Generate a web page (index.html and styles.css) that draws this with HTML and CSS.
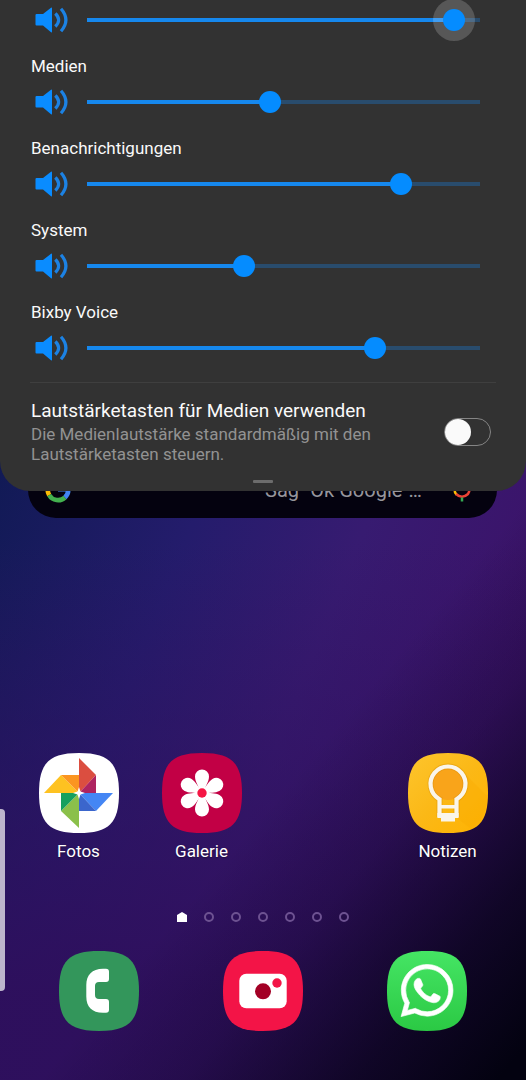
FILE: index.html
```
<!DOCTYPE html>
<html lang="de">
<head>
<meta charset="utf-8">
<meta name="viewport" content="width=device-width, initial-scale=1">
<title>Lautstärke</title>
<link rel="stylesheet" href="styles.css">
</head>
<body>
<svg class="defs" aria-hidden="true">
  <symbol id="speaker" viewBox="0 0 33 26">
    <path d="M1.500 7H8L16 .8Q17 0 17 1.500V24.500Q17 26 16 25.200L8 18.500H1.500Q.5 18.500.5 17.500V8Q.5 7 1.500 7Z" fill="#0a8cff"/>
    <path d="M20.300 6.500Q27 13 20.300 19.500M26 1.800Q35.800 13 26 24.200" fill="none" stroke="#1c82e4" stroke-width="3.200"/>
  </symbol>
  <symbol id="tile" viewBox="0 0 80 80">
    <path d="M40 0C70 0 80 10 80 40S70 80 40 80 0 70 0 40 10 0 40 0Z"/>
  </symbol>
</svg>

<main class="home">
  <div class="search">
    <svg class="search-logo" viewBox="0 0 28 28" fill="none" stroke-width="5" aria-hidden="true">
      <path d="M21.800 6.200A11 11 0 0 0 4.500 8.500" stroke="#ea4335"/>
      <path d="M4.500 8.500A11 11 0 0 0 4.500 19.500" stroke="#fbbc05"/>
      <path d="M4.500 19.500A11 11 0 0 0 21.500 22" stroke="#43b04f"/>
      <path d="M14 13H25A11 11 0 0 1 21.500 22" stroke="#4285f4"/>
    </svg>
    <span class="search-hint">Sag "Ok Google"…</span>
    <button class="mic" aria-label="Sprachsuche">
      <svg viewBox="0 0 24 24" fill="none" stroke-width="2.500" aria-hidden="true">
        <rect x="9" y="0" width="6" height="13" rx="3" fill="#4285f4"/>
        <path d="M4.500 11Q4.500 14.500 6.500 16.500" stroke="#fbbc05"/>
        <path d="M6 16Q12 21.500 18 16Q19.500 14 19.500 11" stroke="#ea4335"/>
        <path d="M12 19.500V23.500" stroke="#34a853"/>
      </svg>
    </button>
  </div>

  <nav class="apps" aria-label="Apps">
    <a class="app" href="#fotos">
      <svg class="app-icon" viewBox="0 0 80 80" aria-hidden="true">
        <use href="#tile" fill="#fff"/>
        <path d="M40 5L57 22L40 40Z" fill="#db4e40"/><path d="M57 22V40H40Z" fill="#ae2460"/>
        <path d="M5 40L22 22L40 40Z" fill="#fec221"/><path d="M22 22H40V40Z" fill="#fb9520"/>
        <path d="M40 40H74L57 58Z" fill="#4486f4"/><path d="M40 40L57 58H40Z" fill="#3b66cc"/>
        <path d="M40 40V75L22 58Z" fill="#8bc04a"/><path d="M22 40H40L22 58Z" fill="#16a05f"/>
        <path d="M40 34L41.500 38.500L46 40L41.500 41.500L40 46L38.500 41.500L34 40L38.500 38.500Z" fill="#fff"/>
      </svg>
      <span>Fotos</span>
    </a>
    <a class="app" href="#galerie">
      <svg class="app-icon" viewBox="0 0 80 80" aria-hidden="true">
        <defs><path id="petal" d="M37.500 38C37 33 33 29 33 23.500A7 7 0 0 1 47 23.500C47 29 43 33 42.500 38Z" fill="#fff"/></defs>
        <use href="#tile" fill="#c20045"/>
        <use href="#petal"/>
        <use href="#petal" transform="rotate(60 40 40)"/>
        <use href="#petal" transform="rotate(120 40 40)"/>
        <use href="#petal" transform="rotate(180 40 40)"/>
        <use href="#petal" transform="rotate(240 40 40)"/>
        <use href="#petal" transform="rotate(300 40 40)"/>
        <circle cx="40" cy="40" r="6" fill="#fff"/>
        <circle cx="40" cy="40" r="4.700" fill="#f51644"/>
      </svg>
      <span>Galerie</span>
    </a>
    <a class="app app-last" href="#notizen">
      <svg class="app-icon" viewBox="0 0 80 80" aria-hidden="true">
        <defs><linearGradient id="amber" x1="0" y1="0" x2="1" y2="1"><stop offset="0" stop-color="#fdc52d"/><stop offset=".5" stop-color="#fbb816"/><stop offset="1" stop-color="#ffb300"/></linearGradient></defs>
        <use href="#tile" fill="url(#amber)"/>
        <path d="M57 21L79 43Q79 66 63 76L50 66V47Q62 36 57 21Z" fill="#f8a900" opacity=".3"/>
        <circle cx="40" cy="31" r="16" fill="#f9a41a"/>
        <path d="M31.500 64V46.300A17.500 17.500 0 1 1 48.500 46.300V64" fill="none" stroke="#c98200" stroke-opacity=".3" stroke-width="6"/>
        <path d="M31.500 64V46.300A17.500 17.500 0 1 1 48.500 46.300V64" fill="none" stroke="#faf5ea" stroke-width="4.200"/>
        <path d="M32 52H48V55.500H32ZM29.400 60H50.600V65H47V68.500H33V65H29.400Z" fill="#faf5ea"/>
      </svg>
      <span>Notizen</span>
    </a>
  </nav>

  <div class="pages" aria-hidden="true">
    <svg class="page-home" viewBox="0 0 10 10"><path d="M0 3L5 0L10 3V10H0Z" fill="#fff"/></svg>
    <i class="page"></i><i class="page"></i><i class="page"></i><i class="page"></i><i class="page"></i><i class="page"></i>
  </div>

  <nav class="dock" aria-label="Favoriten">
    <a class="app" href="#telefon" aria-label="Telefon">
      <svg class="app-icon" viewBox="0 0 80 80" aria-hidden="true">
        <use href="#tile" fill="#33965b"/>
        <path d="M47 17.700H44C33 17.700 27.300 24 27.300 34V45.500C27.300 56 33 61.700 44 61.700H47A3 3 0 0 0 50 58.700V51A3 3 0 0 0 47 48H40A4 4 0 0 1 36 44V35A4 4 0 0 1 40 31H47A3 3 0 0 0 50 28V20.700A3 3 0 0 0 47 17.700Z" fill="#fff"/>
      </svg>
    </a>
    <a class="app" href="#kamera" aria-label="Kamera">
      <svg class="app-icon" viewBox="0 0 80 80" aria-hidden="true">
        <use href="#tile" fill="#f31447"/>
        <rect x="16.300" y="22.700" width="47.400" height="34.600" rx="7" fill="#fff"/>
        <circle cx="40" cy="40.300" r="8" fill="#a30025"/>
        <circle cx="54" cy="32" r="4.700" fill="#f31447"/>
      </svg>
    </a>
    <a class="app" href="#whatsapp" aria-label="WhatsApp">
      <svg class="app-icon" viewBox="0 0 80 80" aria-hidden="true">
        <defs><linearGradient id="lime" x1="0" y1="0" x2="0" y2="1"><stop offset="0" stop-color="#45e564"/><stop offset="1" stop-color="#2bc944"/></linearGradient></defs>
        <use href="#tile" fill="url(#lime)"/>
        <path transform="translate(14 13.500) scale(2.170)" fill="#fff" stroke="#fff" stroke-width=".3" d="M17.472 14.382c-.297-.149-1.758-.867-2.030-.967-.273-.099-.471-.148-.670.150-.197.297-.767.966-.940 1.164-.173.199-.347.223-.644.075-.297-.150-1.255-.463-2.390-1.475-.883-.788-1.480-1.761-1.653-2.059-.173-.297-.018-.458.130-.606.134-.133.298-.347.446-.520.149-.174.198-.298.298-.497.099-.198.050-.371-.025-.520-.075-.149-.669-1.612-.916-2.207-.242-.579-.487-.500-.669-.510-.173-.008-.371-.010-.570-.010-.198 0-.520.074-.792.372-.272.297-1.040 1.016-1.040 2.479 0 1.462 1.065 2.875 1.213 3.074.149.198 2.096 3.200 5.077 4.487.709.306 1.262.489 1.694.625.712.227 1.360.195 1.871.118.571-.085 1.758-.719 2.006-1.413.248-.694.248-1.289.173-1.413-.074-.124-.272-.198-.570-.347m-5.421 7.403h-.004a9.870 9.870 0 0 1-5.031-1.378l-.361-.214-3.741.982.998-3.648-.235-.374a9.860 9.860 0 0 1-1.510-5.260c.001-5.450 4.436-9.884 9.888-9.884 2.640 0 5.122 1.030 6.988 2.898a9.825 9.825 0 0 1 2.893 6.994c-.003 5.450-4.437 9.884-9.885 9.884m8.413-18.297A11.815 11.815 0 0 0 12.050 0C5.495 0 .160 5.335.157 11.892c0 2.096.547 4.142 1.588 5.945L.057 24l6.305-1.654a11.882 11.882 0 0 0 5.683 1.448h.005c6.554 0 11.890-5.335 11.893-11.893a11.821 11.821 0 0 0-3.480-8.413z"/>
      </svg>
    </a>
  </nav>
  <div class="edge-handle"></div>
</main>

<section class="panel" aria-label="Lautstärke">
  <div class="volume">
    <svg class="speaker" aria-hidden="true"><use href="#speaker"/></svg>
    <input class="slider slider-held" type="range" min="0" max="15" value="14" aria-label="Klingelton" style="--level:14">
  </div>
  <label class="volume-label" for="medien">Medien</label>
  <div class="volume">
    <svg class="speaker" aria-hidden="true"><use href="#speaker"/></svg>
    <input class="slider" id="medien" type="range" min="0" max="15" value="7" style="--level:7">
  </div>
  <label class="volume-label" for="benachrichtigungen">Benachrichtigungen</label>
  <div class="volume">
    <svg class="speaker" aria-hidden="true"><use href="#speaker"/></svg>
    <input class="slider" id="benachrichtigungen" type="range" min="0" max="15" value="12" style="--level:12">
  </div>
  <label class="volume-label" for="system">System</label>
  <div class="volume">
    <svg class="speaker" aria-hidden="true"><use href="#speaker"/></svg>
    <input class="slider" id="system" type="range" min="0" max="15" value="6" style="--level:6">
  </div>
  <label class="volume-label" for="bixby">Bixby Voice</label>
  <div class="volume">
    <svg class="speaker" aria-hidden="true"><use href="#speaker"/></svg>
    <input class="slider" id="bixby" type="range" min="0" max="15" value="11" style="--level:11">
  </div>
  <div class="media-keys">
    <label class="media-text" for="media-keys">
      <span class="media-title">Lautstärketasten für Medien verwenden</span>
      <span class="media-note">Die Medienlautstärke standardmäßig mit den Lautstärketasten steuern.</span>
    </label>
    <input class="switch" id="media-keys" type="checkbox" role="switch">
  </div>
  <div class="grip"></div>
</section>
</body>
</html>
```
FILE: styles.css
```
* {
  box-sizing: border-box;
}

body {
  position: relative;
  margin: 0;
  font-family: Roboto, "Liberation Sans", sans-serif;
  font-size: 17px;
  line-height: 24px;
  color: #fafafa;
}

.defs {
  position: absolute;
  width: 0;
  height: 0;
}

/* Home screen */
.home {
  position: relative;
  display: flex;
  flex-direction: column;
  min-height: 100vh;
  padding: 462px 17px 49px;
  background:
    linear-gradient(130deg, rgba(3, 2, 16, 0) 66%, rgba(3, 2, 16, 0.22) 76%, rgba(3, 2, 16, 0.7) 88%, #030210 98%),
    linear-gradient(180deg, rgba(46, 15, 92, 0) 50%, rgba(46, 15, 92, 0.95) 92%),
    linear-gradient(112deg, #101a54 18%, #241c6c 42%, #371b71 60%, #3c1269 82%);
}

.search {
  display: flex;
  align-items: center;
  height: 56px;
  margin: 0 12px 0 11px;
  padding: 0 23px 0 17px;
  border-radius: 28px;
  background: #04020f;
}

.search-logo {
  width: 26px;
  height: 26px;
}

.search-hint {
  margin-left: auto;
  font-size: 20px;
  color: #96959c;
}

.mic {
  width: 24px;
  height: 24px;
  margin-left: 28px;
  padding: 0;
  border: 0;
  background: none;
}

.mic svg {
  display: block;
}

.apps,
.dock {
  display: grid;
  grid-template-columns: repeat(4, 1fr);
}

.apps {
  margin-top: auto;
}

.app {
  display: flex;
  flex-direction: column;
  align-items: center;
  gap: 6px;
  color: #fff;
  text-decoration: none;
  text-shadow: 0 1px 2px rgba(0, 0, 0, 0.4);
}

.app-last {
  grid-column: 4;
}

.app-icon {
  width: 80px;
  height: 80px;
}

.pages {
  display: flex;
  justify-content: center;
  gap: 17px;
  margin: 49px 0 29px;
}

.page,
.page-home {
  width: 10px;
  height: 10px;
}

.page {
  border: 2px solid #6d5291;
  border-radius: 50%;
}

.dock {
  grid-template-columns: repeat(3, 1fr);
}

.edge-handle {
  position: absolute;
  bottom: 89px;
  left: 0;
  width: 5px;
  height: 182px;
  border-radius: 0 4px 4px 0;
  background: #bdb5cc;
}

/* Volume panel, pulled down over the home screen */
.panel {
  position: absolute;
  top: 0;
  left: 0;
  width: 100%;
  overflow: hidden;
  border-radius: 0 0 30px 30px;
  background: #323232;
}

.volume {
  display: flex;
  align-items: center;
  gap: 8px;
  height: 40px;
  padding: 0 35px;
}

.volume-label {
  display: block;
  margin: 14px 31px 4px;
}

.speaker {
  flex: none;
  width: 33px;
  height: 26px;
}

.slider {
  flex: 1;
  min-width: 0;
  height: 22px;
  margin: 0;
  appearance: none;
  background: none;
}

.slider::-webkit-slider-runnable-track {
  height: 22px;
  background:
    linear-gradient(#1688ee, #1688ee) 11px 50% / calc((100% - 22px) * var(--level) / 15) 4px no-repeat,
    linear-gradient(#294c6d, #294c6d) 11px 50% / calc(100% - 22px) 4px no-repeat;
}

.slider::-webkit-slider-thumb {
  width: 22px;
  height: 22px;
  appearance: none;
  border-radius: 50%;
  background: #058cff;
}

.slider-held::-webkit-slider-thumb {
  box-shadow: 0 0 0 10px rgba(255, 255, 255, 0.18);
}

.media-keys {
  display: flex;
  align-items: center;
  justify-content: space-between;
  gap: 24px;
  margin: 14px 30px 0;
  padding: 16px 5px 16px 1px;
  border-top: 1px solid #3f3f3f;
}

.media-title,
.media-note {
  display: block;
}

.media-title {
  margin-bottom: 1px;
  font-size: 19px;
}

.media-note {
  line-height: 20px;
  color: #929292;
}

.switch {
  flex: none;
  width: 47px;
  height: 28px;
  margin: 0;
  appearance: none;
  border: 1px solid #858585;
  border-radius: 14px;
}

.switch::before {
  content: "";
  display: block;
  width: 26px;
  height: 26px;
  border-radius: 50%;
  background: #fafafa;
}

.switch:checked::before {
  margin-left: auto;
}

.grip {
  width: 20px;
  height: 3px;
  margin: 0 auto 8px;
  border-radius: 1px;
  background: #6c6c6c;
}
```
